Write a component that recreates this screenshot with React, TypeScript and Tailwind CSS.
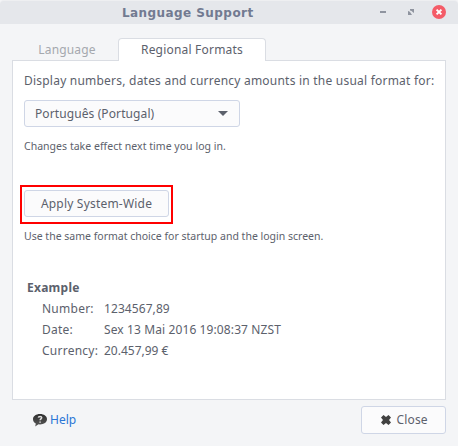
import type { ReactNode } from "react";

function TitleBar() {
  return (
    <header className="flex h-6 shrink-0 items-center rounded-t-sm border-t border-[#eeeff1] bg-[#e5e7eb] pr-[12px]">
      <h1 className="flex-1 pl-[122px] font-['DejaVu_Sans',sans-serif] text-[12px] leading-[22px] font-bold tracking-[0.43px] whitespace-nowrap text-[#727a91]">
        Language Support
      </h1>
      <div className="flex items-center pb-px">
        <span className="h-[2px] w-[6px] bg-[#8f949f]" />
        <svg className="ml-[22px]" width="6" height="6" viewBox="0 0 6 6" fill="#8f949f">
          <path d="M2 0H6V4L4.6 3L3.6 2L2 1.4Z" />
          <path d="M0 2L1.4 2.6L2.4 3.6L3 4.6L4 6H0Z" />
        </svg>
        <svg className="ml-[18px]" width="14" height="14" viewBox="0 0 14 14">
          <circle cx="7" cy="7" r="7" fill="#f45c68" />
          <path d="M4.6 4.6L9.4 9.4M9.4 4.6L4.6 9.4" stroke="#fff" strokeWidth="2" />
        </svg>
      </div>
    </header>
  );
}

function Note({ children, className }: { children: ReactNode; className: string }) {
  return <p className={`text-[10.5px] leading-4 whitespace-nowrap ${className}`}>{children}</p>;
}

function Row({ label, value, spacing }: { label: string; value: string; spacing: string }) {
  return (
    <div className="flex h-[21px] items-center whitespace-nowrap">
      <dt className="w-[62px] shrink-0 tracking-[0.25px]">{label}</dt>
      <dd className={spacing}>{value}</dd>
    </div>
  );
}

export default function App() {
  return (
    <div className="flex h-[446px] w-[458px] flex-col overflow-hidden bg-[#f4f5f7] font-['Noto_Sans',sans-serif] text-[12px] leading-4 text-[#5c616c]">
      <TitleBar />
      <main className="flex flex-1 flex-col px-3 pt-[14px]">
        <nav className="z-10 -mb-px flex h-[23px]">
          <button className="w-[106px] pt-px pl-1 tracking-[0.15px] text-[#a5a8ae]">Language</button>
          <button className="w-[148px] rounded-t-sm border border-b-0 border-[#dadde3] bg-white tracking-[0.2px]">
            Regional Formats
          </button>
        </nav>
        <section className="h-[340px] w-[434px] border border-[#dadde3] bg-white pl-[11px]">
          <p className="pt-[12px] tracking-[0.22px] whitespace-nowrap">
            Display numbers, dates and currency amounts in the usual format for:
          </p>
          <button className="mt-[11px] flex h-[27px] w-[216px] items-center justify-between rounded-[3px] border border-[#cfd6e6] bg-[#fbfbfc] pr-[11px] pl-[10px]">
            <span className="tracking-[0.1px]">Português (Portugal)</span>
            <svg width="10" height="5" viewBox="0 0 10 5">
              <path d="M0 0H10L5 5Z" fill="#5c616c" />
            </svg>
          </button>
          <Note className="mt-[11px] tracking-[0.03px]">Changes take effect next time you log in.</Note>
          <div className="mt-[31px] -ml-1 h-[39px] w-[153px] border-2 border-[#ff0000] pt-[3px] pl-[2px]">
            <button className="h-[27px] w-[145px] rounded-[3px] border border-[#cfd6e6] bg-[#fbfbfc] tracking-[0.2px]">
              Apply System-Wide
            </button>
          </div>
          <Note className="mt-[4px]">Use the same format choice for startup and the login screen.</Note>
          <h2 className="mt-[36px] ml-[3px] font-bold tracking-[0.25px]">Example</h2>
          <dl className="mt-[2px] ml-[18px]">
            <Row label="Number:" value="1234567,89" spacing="tracking-[0.08px]" />
            <Row label="Date:" value="Sex 13 Mai 2016 19:08:37 NZST" spacing="tracking-[0.11px]" />
            <Row label="Currency:" value="20.457,99 €" spacing="" />
          </dl>
        </section>
        <footer className="mt-[6px] flex h-7 items-center justify-between">
          <a className="ml-[21px] flex items-center gap-[3px] text-[#2a76d6]">
            <svg width="14" height="14" viewBox="0 0 14 14">
              <defs>
                <linearGradient id="bubble" x1="0" y1="0" x2="0" y2="1">
                  <stop offset="0" stopColor="#2e2e2e" />
                  <stop offset="1" stopColor="#5a5a5a" />
                </linearGradient>
              </defs>
              <path d="M7 1C11 1 14 3.2 14 6.2C14 9.2 11 11.4 7 11.4L5.5 11.3L2.2 13.5L2.8 10.5C1 9.5 0 8 0 6.2C0 3.2 3 1 7 1Z" fill="url(#bubble)" />
              <path d="M5.3 4.6C5.5 3 8.7 3 8.7 4.6C8.7 5.8 7.1 5.9 7.1 7.3M7.1 8.4V9.8" fill="none" stroke="#e0e0e0" strokeWidth="1.5" />
            </svg>
            <span>Help</span>
          </a>
          <button className="flex h-7 w-[85px] items-center rounded-[3px] border border-[#cfd6e6] bg-[#fbfbfc] pl-[19px]">
            <svg width="10" height="10" viewBox="0 0 10 10">
              <path d="M2.5 0L5 2L7.5 0L10 2.5L8 5L10 7.5L7.5 10L5 8L2.5 10L0 7.5L2 5L0 2.5Z" fill="#414141" />
            </svg>
            <span className="ml-[5.5px] tracking-[0.15px]">Close</span>
          </button>
        </footer>
      </main>
    </div>
  );
}
